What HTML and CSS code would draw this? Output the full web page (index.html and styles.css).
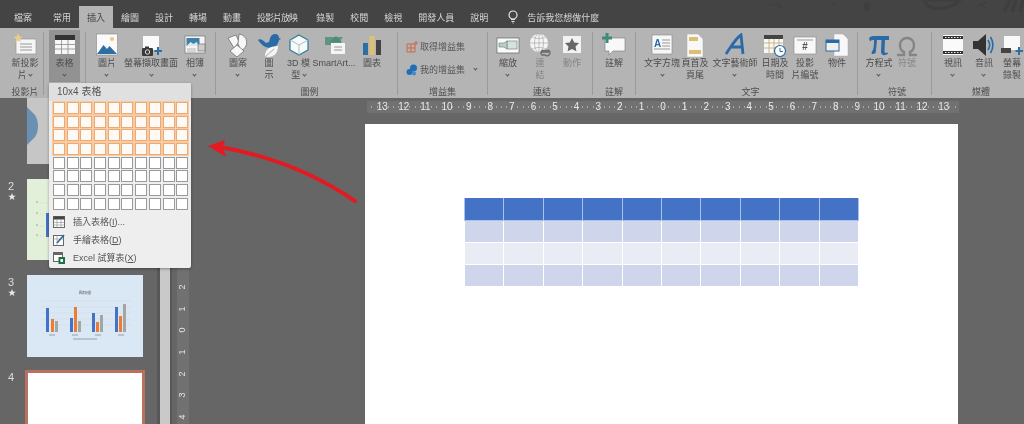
FILE: index.html
```html
<!DOCTYPE html>
<html lang="zh-Hant">
<head>
<meta charset="utf-8">
<title>PowerPoint 插入表格</title>
<link rel="stylesheet" href="styles.css">
</head>
<body>
<div class="app">
  <nav class="tabs">
    <span class="tab first">檔案</span>
    <span class="tab">常用</span>
    <span class="tab active">插入</span>
    <span class="tab">繪圖</span>
    <span class="tab">設計</span>
    <span class="tab">轉場</span>
    <span class="tab">動畫</span>
    <span class="tab tight">投影片放映</span>
    <span class="tab">錄製</span>
    <span class="tab">校閱</span>
    <span class="tab">檢視</span>
    <span class="tab">開發人員</span>
    <span class="tab">說明</span>
    <span class="tell">
      <svg width="12" height="14" viewBox="0 0 12 14"><circle cx="6" cy="5" r="4" fill="none" stroke="#e4e4e4" stroke-width="1.2"/><path d="M4 9.5h4M4.5 11.5h3M5.5 13h1" stroke="#e4e4e4" stroke-width="1.1"/></svg>
      告訴我您想做什麼
    </span>
    <svg class="titleart" width="324" height="28" viewBox="0 0 324 28"><path d="M66 4l14 2M78 2l3 6" stroke="#3f3f3f" stroke-width="1.2" fill="none"/><circle cx="134" cy="4" r="1.500" fill="#3f3f3f"/><path d="M165 3c-2 3-1 7 2 7s4-4 2-7zM166 10v4" stroke="#3f3f3f" fill="#3f3f3f"/><path d="M224 0c2 8 12 10 20 8 6-1 12-3 16-8z" fill="none" stroke="#3e3e3e" stroke-width="3"/><path d="M275 8l12-6M280 3l6 6" stroke="#3f3f3f" stroke-width="1.200"/><path d="M304 12l6-12M312 12l4-12M320 12l3-12" stroke="#3e3e3e" stroke-width="3"/></svg>
  </nav>

  <section class="ribbon">
    <div class="group g1">
      <div class="items">
        <div class="btn w36">
          <svg class="ic" viewBox="0 0 24 24"><rect x="3" y="6" width="20" height="15" fill="#f5f5f5" stroke="#999" stroke-width=".7"/><path d="M7 11h12M7 14h12M7 17h12" stroke="#9a9a9a"/><path d="M5 0l1.3 3.2L9.5 4 7 6l.6 3.2L5 7.6 2.400 9.200 3 6 .5 4l3.200-.8z" fill="#eccb8e"/></svg>
          <span>新投影<br>片 <i class="chev"></i></span>
        </div>
      </div>
      <div class="glabel">投影片</div>
    </div>
    <div class="group g2">
      <div class="items">
        <div class="btn w31 on">
          <svg class="ic" viewBox="0 0 24 24"><rect x="2" y="2" width="20" height="19" fill="#f7f7f7"/><rect x="2" y="2" width="20" height="5" fill="#333"/><path d="M2 11.500h20M2 16h20M8.500 7v14M15 7v14" stroke="#8a8a8a" stroke-width=".8"/></svg>
          <span>表格<br><i class="chev"></i></span>
        </div>
      </div>
    </div>
    <div class="group g3">
      <div class="items">
        <div class="btn w34">
          <svg class="ic" viewBox="0 0 24 24"><rect x="1.500" y="1" width="21" height="21" fill="#fafafa" stroke="#888" stroke-width=".6"/><circle cx="17" cy="6" r="2" fill="#eec878"/><path d="M2 21l6.500-9 3.500 4 2.500-3 7.500 8z" fill="#2f6ea5"/></svg>
          <span>圖片<br><i class="chev"></i></span>
        </div>
        <div class="btn w54">
          <svg class="ic" viewBox="0 0 24 24"><rect x="4" y="3" width="16" height="14" fill="#fafafa"/><rect x="3" y="15" width="11" height="8" rx="1" fill="#3a3a3a"/><rect x="6" y="13.500" width="4" height="2" fill="#3a3a3a"/><circle cx="8.500" cy="19" r="2.200" fill="none" stroke="#ddd"/><path d="M19 14v8M15.500 18h7.500" stroke="#2f6ea5" stroke-width="2"/></svg>
          <span>螢幕擷取畫面<br><i class="chev"></i></span>
        </div>
        <div class="btn w34">
          <svg class="ic" viewBox="0 0 24 24"><rect x="2" y="3" width="20" height="17" fill="#f4f4f4" stroke="#777" stroke-width=".7"/><rect x="3.500" y="5" width="13" height="8" fill="#3f7fa8"/><path d="M3.500 13l4-4 3 2 3-2 3 4z" fill="#d9e8e4"/><rect x="15" y="11" width="7" height="7" fill="#ccc" stroke="#666" stroke-width=".6"/><path d="M4 16h9M4 18h9" stroke="#999" stroke-width=".7"/></svg>
          <span>相簿<br><i class="chev"></i></span>
        </div>
      </div>
    </div>
    <div class="group g4">
      <div class="items">
        <div class="btn w32">
          <svg class="ic" viewBox="0 0 24 24"><path d="M2 5l8-3 3 7-5 6z" fill="#f7f7f7" stroke="#666" stroke-width=".7"/><path d="M13 1a8.500 8.500 0 0 1 2 16.500L12 11z" fill="#f7f7f7" stroke="#666" stroke-width=".7"/><path d="M11 12l7 6-7 6-7-6z" fill="#f7f7f7" stroke="#666" stroke-width=".7"/></svg>
          <span>圖案<br><i class="chev"></i></span>
        </div>
        <div class="btn w30">
          <svg class="ic" viewBox="0 0 24 24"><path d="M1 7c2-2 6 1 8 3l3-1c1-4 2-8 6-8 3 0 4 2 4 4l2 1-2 1c-1 5-4 8-8 8-7 0-10-4-13-8z" fill="#2a6aa6"/><path d="M8 23c0-6 4-10 13-10 0 7-4 11-10 11z" fill="#f5f5f5"/><path d="M9 23l8-7" stroke="#777" stroke-width=".6"/></svg>
          <span>圖<br>示</span>
        </div>
        <div class="btn w29">
          <svg class="ic" viewBox="0 0 24 24"><path d="M12 2l9 5v10l-9 5-9-5V7z" fill="#f8f8f8" stroke="#2a7a90" stroke-width="1.200"/><path d="M3 7l9 5 9-5M12 12v10" fill="none" stroke="#9fc4cf"/></svg>
          <span>3D 模<br>型 <i class="chev"></i></span>
        </div>
        <div class="btn w42">
          <svg class="ic" viewBox="0 0 24 24"><path d="M3 4h18l-3 4 3 4H3z" fill="#5c9683"/><path d="M8 9l6-6 6 6z" fill="#4f8a78"/><rect x="9" y="10" width="14" height="11" fill="#f5f5f5"/><path d="M12 14h8M12 17h8" stroke="#999"/></svg>
          <span>SmartArt...</span>
        </div>
        <div class="btn w34">
          <svg class="ic" viewBox="0 0 24 24"><rect x="3" y="10" width="5" height="12" fill="#2f6ea5"/><rect x="9.500" y="3" width="5" height="19" fill="#ddc173"/><rect x="16" y="7" width="5" height="15" fill="#444"/></svg>
          <span>圖表</span>
        </div>
      </div>
      <div class="glabel">圖例</div>
    </div>
    <div class="group g5">
      <div class="addins">
        <div class="addin">
          <svg width="12" height="12" viewBox="0 0 12 12"><path d="M1 3h8v8H1zM1 7h8M5 3v8" fill="none" stroke="#c9684a"/><path d="M10 0v4M8 2h4" stroke="#c9684a"/></svg>
          <span>取得增益集</span>
        </div>
        <div class="addin">
          <svg width="12" height="12" viewBox="0 0 12 12"><circle cx="7.500" cy="4" r="3.500" fill="#1f6fb5"/><circle cx="3.500" cy="8" r="3" fill="#1f6fb5"/><circle cx="8" cy="9.500" r="2" fill="#3f8ac9"/></svg>
          <span>我的增益集</span>
          <i class="chev wide"></i>
        </div>
      </div>
      <div class="glabel">增益集</div>
    </div>
    <div class="group g6">
      <div class="items">
        <div class="btn w32">
          <svg class="ic" viewBox="0 0 24 24"><rect x="1" y="5" width="22" height="15" fill="#fafafa" stroke="#666" stroke-width=".7"/><rect x="11" y="8" width="10" height="8" fill="#d8e2dc" stroke="#6b8d80" stroke-width=".7"/><path d="M3 10h5l3-2v8l-3-2H3z" fill="#c2ccc6" stroke="#6b8d80" stroke-width=".7"/></svg>
          <span>縮放<br><i class="chev"></i></span>
        </div>
        <div class="btn w32 dim">
          <svg class="ic" viewBox="0 0 24 24"><circle cx="11" cy="10" r="9.500" fill="#f5f5f5" stroke="#aaa" stroke-width=".7"/><path d="M1.500 10h19M11 .5v19M4 4c4 2 10 2 14 0M4 16c4-2 10-2 14 0" fill="none" stroke="#aaa" stroke-width=".7"/><ellipse cx="11" cy="10" rx="4.500" ry="9.500" fill="none" stroke="#aaa" stroke-width=".7"/><path d="M13 19h8M14 17.500a3 3 0 0 0 0 4.500h3a3 3 0 0 0 4-4.500z" fill="none" stroke="#6e6e6e" stroke-width="1.400"/></svg>
          <span>連<br>結</span>
        </div>
        <div class="btn w32 dim">
          <svg class="ic" viewBox="0 0 24 24"><rect x="3" y="3" width="18" height="17" fill="#f2f2f2"/><path d="M12 5l2.200 4.500 4.800.6-3.500 3.300.9 4.800L12 15.900 7.600 18.200l.9-4.800L5 10.100l4.800-.6z" fill="#666"/></svg>
          <span>動作</span>
        </div>
      </div>
      <div class="glabel">連結</div>
    </div>
    <div class="group g7">
      <div class="items">
        <div class="btn w42">
          <svg class="ic" viewBox="0 0 24 24"><path d="M3 5h20v13H11l-4 4v-4H3z" fill="#f8f8f8" stroke="#777" stroke-width=".6"/><path d="M5 0v10M0 5h10" stroke="#3f8a78" stroke-width="3"/></svg>
          <span>註解</span>
        </div>
      </div>
      <div class="glabel">註解</div>
    </div>
    <div class="group g8">
      <div class="items">
        <div class="btn w36">
          <svg class="ic" viewBox="0 0 24 24"><rect x="2" y="2" width="20" height="19" fill="#f7f7f7" stroke="#888" stroke-width=".6"/><text x="4" y="14" class="ictext">A</text><path d="M12 7h8M12 10h8M12 13h8M4 16h16" stroke="#999"/></svg>
          <span>文字方塊<br><i class="chev"></i></span>
        </div>
        <div class="btn w30">
          <svg class="ic" viewBox="0 0 24 24"><path d="M4 1h11l5 5v18H4z" fill="#f8f8f8" stroke="#aaa" stroke-width=".5"/><rect x="6" y="4" width="9" height="4" fill="#ddbf72"/><rect x="6" y="17" width="12" height="4" fill="#ddbf72"/></svg>
          <span>頁首及<br>頁尾</span>
        </div>
        <div class="btn w50">
          <svg class="ic" viewBox="0 0 24 24"><path d="M3 21C8 14 12 6 18 2l2 19M8 14h12" fill="none" stroke="#2a6aa6" stroke-width="2.800"/></svg>
          <span>文字藝術師<br><i class="chev"></i></span>
        </div>
        <div class="btn w30">
          <svg class="ic" viewBox="0 0 24 24"><rect x="1" y="2" width="19" height="18" fill="#f7f7f7"/><rect x="1" y="2" width="19" height="4" fill="#444"/><path d="M1 10h19M1 15h19M6 6v14M11 6v14M16 6v14" stroke="#c2a86a" stroke-width=".8"/><circle cx="17" cy="18" r="5.500" fill="#fafafa" stroke="#2a6aa6" stroke-width="1.200"/><path d="M17 15v3.500h3" fill="none" stroke="#2a6aa6"/></svg>
          <span>日期及<br>時間</span>
        </div>
        <div class="btn w30">
          <svg class="ic" viewBox="0 0 24 24"><rect x="1" y="4" width="22" height="17" fill="#f8f8f8" stroke="#888" stroke-width=".6"/><path d="M4 7h16" stroke="#999"/><text x="9" y="17" class="ictext dark">#</text></svg>
          <span>投影<br>片編號</span>
        </div>
        <div class="btn w34">
          <svg class="ic" viewBox="0 0 24 24"><path d="M9 1h9l5 5v17H9z" fill="#f8f8f8" stroke="#aaa" stroke-width=".5"/><rect x="1" y="7" width="13" height="11" fill="#f0f0f0" stroke="#2a6aa6"/><rect x="1" y="7" width="13" height="3" fill="#2a6aa6"/></svg>
          <span>物件</span>
        </div>
      </div>
      <div class="glabel">文字</div>
    </div>
    <div class="group g9">
      <div class="items">
        <div class="btn w32">
          <svg class="ic" viewBox="0 0 24 24"><path d="M2 5c2-2 4-2 6-2h14v4h-4l-.5 11c0 2 1 2.500 3 1.500l.5 1c-2 2-7 3-7-2l.5-11.500H10l-1 10c0 3-1 4-3 4-2 0-1.500-2-1-2.500 2-2 2-8 2-11.500-2 0-3 0-4 1.500z" fill="#2a6aa6"/></svg>
          <span>方程式<br><i class="chev"></i></span>
        </div>
        <div class="btn w24 dim">
          <svg class="ic" viewBox="0 0 24 24"><path d="M2 22h7v-3c-3-1-4-4-4-7 0-4 3-7 7-7s7 3 7 7c0 3-1 6-4 7v3h7" fill="none" stroke="#858585" stroke-width="2.400"/></svg>
          <span>符號</span>
        </div>
      </div>
      <div class="glabel">符號</div>
    </div>
    <div class="group g10">
      <div class="items">
        <div class="btn w30">
          <svg class="ic" viewBox="0 0 24 24"><rect x="2" y="2" width="20" height="20" fill="#fafafa"/><path d="M2 3h20v3H2zM2 18h20v3H2z" fill="#333"/><path d="M4 4.500h16M4 19.500h16" stroke="#eee" stroke-dasharray="1.500 1.500"/></svg>
          <span>視訊<br><i class="chev"></i></span>
        </div>
        <div class="btn w32">
          <svg class="ic" viewBox="0 0 24 24"><path d="M1 8h5l8-7v22l-8-7H1z" fill="#333"/><path d="M16 7c2 3 2 7 0 10M18.500 4c3 5 3 11 0 16" fill="none" stroke="#2a6aa6" stroke-width="1.600"/></svg>
          <span>音訊<br><i class="chev"></i></span>
        </div>
        <div class="btn w24">
          <svg class="ic" viewBox="0 0 24 24"><rect x="4" y="3" width="16" height="14" fill="#fafafa"/><rect x="1" y="15" width="10" height="5" fill="#444"/><path d="M19 14v8M15.500 18h7.500" stroke="#2f6ea5" stroke-width="2"/></svg>
          <span>螢幕<br>錄製</span>
        </div>
      </div>
      <div class="glabel">媒體</div>
    </div>
  </section>

  <main class="workspace">
    <aside class="side">
      <div class="slide-row first-row">
        <div class="thumb t1">
          <svg class="fan" viewBox="0 0 14 38"><path d="M0 0l8 8c4 6 4 16 0 22l-8 8z" fill="#6b90b2"/></svg>
        </div>
      </div>
      <div class="slide-row r2">
        <div class="num">2<b>★</b></div>
        <div class="thumb t2">
          <svg class="t2chart" width="24" height="40" viewBox="0 0 24 40"><path d="M2 3h20M2 14h20M2 26h20M2 36h20" stroke="#bccbb2" stroke-width=".6" stroke-dasharray="1 2"/><path d="M2 1v2M2 12v2M2 24v2M2 34v2" stroke="#9bb08c"/><rect x="11" y="13" width="3" height="24" fill="#4472c4"/></svg>
        </div>
      </div>
      <div class="slide-row r3">
        <div class="num">3<b>★</b></div>
        <div class="thumb t3">
          <svg viewBox="0 0 116 82" width="116" height="82">
            <text x="58" y="19" class="charttitle">圖表標題</text>
            <path d="M14 26h90M14 32h90M14 38h90M14 44h90M14 50h90" stroke="#cfd8e2" stroke-width=".5"/>
            <rect x="19" y="33" width="3" height="24" fill="#4472c4"/><rect x="24" y="44" width="3" height="13" fill="#ed7d31"/><rect x="28" y="46" width="3" height="11" fill="#a5a5a5"/>
            <rect x="43" y="43" width="3" height="14" fill="#4472c4"/><rect x="47" y="32" width="3" height="25" fill="#ed7d31"/><rect x="51" y="46" width="3" height="11" fill="#a5a5a5"/>
            <rect x="65" y="38" width="3" height="19" fill="#4472c4"/><rect x="69" y="47" width="3" height="10" fill="#ed7d31"/><rect x="73" y="40" width="3" height="17" fill="#a5a5a5"/>
            <rect x="88" y="32" width="3" height="25" fill="#4472c4"/><rect x="92" y="41" width="3" height="16" fill="#ed7d31"/><rect x="96" y="29" width="3" height="28" fill="#a5a5a5"/>
            <path d="M22 60h6M45 60h6M68 60h6M91 60h6M46 64h24" stroke="#8b98a8" stroke-width=".9"/>
          </svg>
        </div>
      </div>
      <div class="slide-row r4">
        <div class="num">4</div>
        <div class="thumb t4"></div>
      </div>
    </aside>
    <div class="scrollbar"></div>
    <div class="vruler">
      <span>9</span><span>8</span><span>7</span><span>6</span><span>5</span><span>4</span><span>3</span><span>2</span><span>1</span>
      <span>0</span><span>1</span><span>2</span><span>3</span><span>4</span>
    </div>
    <div class="stage">
      <div class="hruler">
        <span>13</span><span>12</span><span>11</span><span>10</span><span>9</span><span>8</span><span>7</span><span>6</span><span>5</span><span>4</span><span>3</span><span>2</span><span>1</span><span>0</span><span>1</span><span>2</span><span>3</span><span>4</span><span>5</span><span>6</span><span>7</span><span>8</span><span>9</span><span>10</span><span>11</span><span>12</span><span>13</span>
      </div>
      <div class="slide">
        <table class="deck-table">
          <tr class="head"><td></td><td></td><td></td><td></td><td></td><td></td><td></td><td></td><td></td><td></td></tr>
          <tr class="band"><td></td><td></td><td></td><td></td><td></td><td></td><td></td><td></td><td></td><td></td></tr>
          <tr class="plain"><td></td><td></td><td></td><td></td><td></td><td></td><td></td><td></td><td></td><td></td></tr>
          <tr class="band"><td></td><td></td><td></td><td></td><td></td><td></td><td></td><td></td><td></td><td></td></tr>
        </table>
      </div>
    </div>
  </main>

  <div class="menu">
    <div class="menu-head">10x4 表格</div>
    <div class="picker">
      <i class="s"></i><i class="s"></i><i class="s"></i><i class="s"></i><i class="s"></i><i class="s"></i><i class="s"></i><i class="s"></i><i class="s"></i><i class="s"></i>
      <i class="s"></i><i class="s"></i><i class="s"></i><i class="s"></i><i class="s"></i><i class="s"></i><i class="s"></i><i class="s"></i><i class="s"></i><i class="s"></i>
      <i class="s"></i><i class="s"></i><i class="s"></i><i class="s"></i><i class="s"></i><i class="s"></i><i class="s"></i><i class="s"></i><i class="s"></i><i class="s"></i>
      <i class="s"></i><i class="s"></i><i class="s"></i><i class="s"></i><i class="s"></i><i class="s"></i><i class="s"></i><i class="s"></i><i class="s"></i><i class="s"></i>
      <i></i><i></i><i></i><i></i><i></i><i></i><i></i><i></i><i></i><i></i>
      <i></i><i></i><i></i><i></i><i></i><i></i><i></i><i></i><i></i><i></i>
      <i></i><i></i><i></i><i></i><i></i><i></i><i></i><i></i><i></i><i></i>
      <i></i><i></i><i></i><i></i><i></i><i></i><i></i><i></i><i></i><i></i>
    </div>
    <div class="menu-item">
      <svg width="12" height="12" viewBox="0 0 12 12"><rect x=".5" y=".5" width="11" height="11" fill="#fff" stroke="#666"/><rect x=".5" y=".5" width="11" height="3" fill="#444"/><path d="M.5 6.500h11M.5 9h11M4 3.500v8M8 3.500v8" stroke="#999" stroke-width=".7"/></svg>
      <span>插入表格(<u>I</u>)...</span>
    </div>
    <div class="menu-item">
      <svg width="12" height="12" viewBox="0 0 12 12"><rect x=".5" y="1.500" width="10" height="10" fill="#fff" stroke="#666"/><path d="M.5 5h10M4 1.500v10" stroke="#999" stroke-width=".7"/><path d="M4 9l7-8" stroke="#2a6aa6" stroke-width="1.600"/></svg>
      <span>手繪表格(<u>D</u>)</span>
    </div>
    <div class="menu-item">
      <svg width="12" height="12" viewBox="0 0 12 12"><rect x=".5" y=".5" width="9" height="9" fill="#fff" stroke="#666"/><rect x=".5" y=".5" width="9" height="2.500" fill="#666"/><rect x="5.500" y="5" width="6.500" height="7" fill="#1e7145"/><rect x="7.500" y="7" width="2.500" height="3" fill="#fff"/></svg>
      <span>Excel 試算表(<u>X</u>)</span>
    </div>
  </div>

  <svg class="arrow" width="160" height="70" viewBox="0 0 160 70">
    <path d="M150 62C115 38 70 17 10 7" fill="none" stroke="#e21b23" stroke-width="4" stroke-linecap="round"/>
    <path d="M3 7L20 1l-2 7 3 10z" fill="#e21b23"/>
  </svg>
</div>
</body>
</html>
```
FILE: styles.css
```css
* { box-sizing: border-box; }
html, body { margin: 0; padding: 0; }
body { background: #666; font-family: "Liberation Sans", "Noto Sans CJK TC", sans-serif; }

.app { position: relative; width: 1024px; height: 424px; overflow: hidden; background: #666; filter: blur(.35px); }

/* tab strip */
.tabs { display: flex; align-items: flex-end; height: 28px; padding-left: 6px; background: #444; color: #d6d6d6; font-size: 9px; overflow: hidden; }
.tab { display: flex; align-items: center; height: 22px; padding: 0 8px; white-space: nowrap; }
.tab.first { margin-right: 5px; }
.tab.active { background: #b4b4b4; color: #444; }
.tab.tight { letter-spacing: -1px; margin-right: 3px; }
.tell { display: flex; align-items: center; gap: 8px; height: 22px; margin-left: 11px; white-space: nowrap; }
.titleart { flex: none; margin-left: auto; align-self: flex-start; }

/* ribbon */
.ribbon { display: flex; height: 70px; padding: 4px 0 3px; background: #b4b4b4; color: #4c4c4c; font-size: 9px; line-height: 12px; overflow: hidden; }
.group { display: flex; flex: none; flex-direction: column; justify-content: space-between; border-right: 1px solid #9a9a9a; }
.g1 { width: 44px; padding-left: 7px; }
.g2 { width: 42px; padding-left: 5px; }
.g3 { width: 130px; padding-left: 4px; }
.g4 { width: 182px; padding-left: 6px; }
.g5 { width: 90px; }
.g6 { width: 105px; padding-left: 4px; }
.g7 { width: 43px; }
.g8 { width: 222px; padding-left: 8px; }
.g9 { width: 74px; padding-left: 5px; }
.g10 { width: 92px; padding-left: 6px; border-right: 0; }
.items { display: flex; padding-top: 1px; }
.btn { display: flex; flex: none; flex-direction: column; align-items: center; text-align: center; white-space: nowrap; }
.btn.on { background: #929292; margin-top: -3px; padding-top: 3px; height: 52px; }
.btn.dim { color: #848484; }
.ic { display: block; width: 24px; height: 24px; flex: none; }
.ictext { font: bold 10px "Liberation Sans", sans-serif; fill: #2a6aa6; }
.ictext.dark { fill: #555; font-style: italic; }
.w24 { width: 24px; } .w29 { width: 29px; } .w30 { width: 30px; } .w31 { width: 31px; }
.w32 { width: 32px; } .w34 { width: 34px; } .w36 { width: 36px; } .w42 { width: 42px; }
.w50 { width: 50px; } .w54 { width: 54px; }
.chev { display: inline-block; width: 3px; height: 3px; margin-bottom: 2px; border-right: 1px solid #555; border-bottom: 1px solid #555; transform: rotate(45deg); }
.chev.wide { margin-left: 7px; }
.glabel { margin-bottom: -3px; text-align: center; }
.addins { display: flex; flex-direction: column; gap: 8px; padding: 7px 0 0 8px; }
.addin { display: flex; align-items: center; gap: 2px; height: 15px; color: #555; white-space: nowrap; }

/* workspace */
.workspace { display: flex; height: 326px; overflow: hidden; }
.side { flex: none; width: 157px; overflow: hidden; }
.slide-row { display: flex; color: #ddd; }
.first-row { height: 66px; padding-left: 27px; }
.r2 { margin-top: 15px; padding-left: 8px; }
.r3 { margin-top: 15px; padding-left: 8px; }
.r4 { margin-top: 13px; padding-left: 8px; }
.num { display: flex; flex-direction: column; flex: none; width: 19px; font-size: 11px; line-height: 12px; padding-top: 1px; }
.num b { font-weight: normal; font-size: 8px; line-height: 10px; color: #eee; }
.thumb { flex: none; width: 116px; height: 82px; overflow: hidden; }
.t1 { height: 66px; background: #c6c6c6; }
.fan { display: block; width: 14px; height: 38px; margin-top: 9px; }
.t2 { height: 81px; padding: 21px 0 0 8px; background: #e2efd9; }
.t2chart { display: block; }
.t3 { background: #dae7f5; }
.t3 svg { display: block; }
.charttitle { font: 3px "Noto Sans CJK TC", sans-serif; fill: #555; text-anchor: middle; }
.t4 { width: 120px; height: 90px; margin-left: -2px; background: #fff; border: 3px solid #b9705f; }
.scrollbar { flex: none; width: 15px; background: #c9c9c9; border-left: 3px solid #575757; border-right: 2px solid #575757; }
.vruler { display: flex; flex: none; flex-direction: column; align-items: center; width: 12px; height: 412px; margin: 26px 0 0 5px; padding-top: 1px; background: #717171; color: #e4e4e4; font-size: 9px; }
.vruler span { flex: none; height: 21.6px; line-height: 21.6px; writing-mode: vertical-rl; transform: rotate(180deg); text-align: center; }
.stage { flex: 1; min-width: 0; }
.hruler { display: flex; justify-content: center; width: 592px; height: 12px; margin: 3px 0 0 178px; background: #717171 repeating-linear-gradient(90deg, transparent 0 4.4px, #a8a8a8 4.4px 5.400px) 0 5px / 100% 2px no-repeat; color: #e8e8e8; font-size: 10px; line-height: 12px; }
.hruler span { flex: none; width: 21.6px; text-align: center; }
.slide { width: 593px; height: 412px; margin: 11px 0 0 176px; padding: 74px 0 0 99px; background: #fff; }
.deck-table { width: 395px; border-collapse: collapse; table-layout: fixed; }
.deck-table td { height: 22px; padding: 0; border: 1px solid #fff; }
.deck-table tr:first-child td { border-top: 0; }
.head td { background: #4472c4; border-color: #a9c3ec; }
.band td { background: #cfd5ea; }
.plain td { background: #e9ebf5; }

/* table dropdown */
.menu { position: absolute; left: 49px; top: 83px; width: 142px; height: 185px; background: #eee; border-radius: 2px; box-shadow: 0 1px 3px rgba(0,0,0,.35); color: #555; font-size: 9px; }
.menu-head { height: 18px; padding-left: 8px; background: #e0e0e0; font-size: 10px; line-height: 17px; border-radius: 2px 2px 0 0; }
.picker { display: grid; grid-template-columns: repeat(10, 12px); grid-auto-rows: 12px; gap: 1.7px; padding: 1px 0 0 4px; }
.picker i { background: #fff; border: 1px solid #9a9a9a; }
.picker i.s { border: 1px solid #edab72; box-shadow: 0 0 0 1px #f5cba8; background: #fffaf5; }
.menu-item { display: flex; align-items: center; gap: 8px; height: 18px; padding-left: 4px; white-space: nowrap; }
.picker + .menu-item { margin-top: 3px; }

.arrow { position: absolute; left: 205px; top: 139px; }
```
